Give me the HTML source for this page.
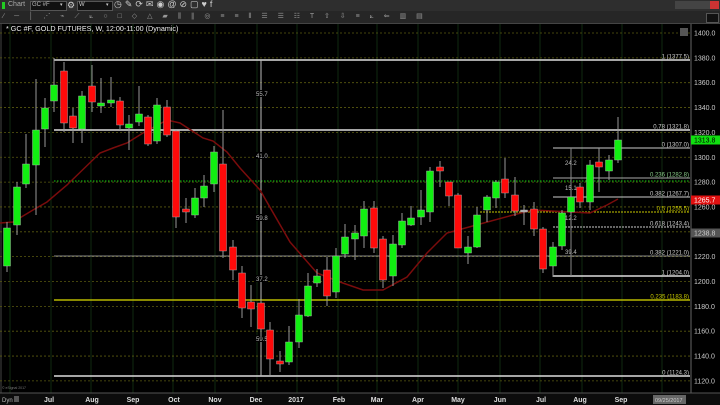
<!DOCTYPE html>
<html><head><meta charset="utf-8"><style>
html,body{margin:0;padding:0;background:#000;width:720px;height:405px;overflow:hidden;font-family:"Liberation Sans",sans-serif}
#top{position:absolute;left:0;top:0;width:720px;height:11px;background:#2e2e2e}
#tb{position:absolute;left:0;top:11px;width:720px;height:12px;background:#262626;border-bottom:1px solid #444}
.t{position:absolute;color:#ccc;font-size:7px;line-height:10px;white-space:nowrap}
</style></head><body>
<div id="top">
 <div style="position:absolute;left:2px;top:2px;width:3px;height:7px;background:#2c2"></div>
 <div class="t" style="left:8px;top:0;color:#aaa">Chart</div>
 <div style="position:absolute;left:30px;top:1px;width:35px;height:8px;background:#111;border:1px solid #555"></div>
 <div class="t" style="left:32px;top:0;font-size:6px;color:#bbb">GC #F</div>
 <div class="t" style="left:60px;top:0;font-size:5px">▾</div>
 <div class="t" style="left:67px;top:0;font-size:9px">⚙</div>
 <div style="position:absolute;left:77px;top:1px;width:34px;height:8px;background:#111;border:1px solid #555"></div>
 <div class="t" style="left:79px;top:0;font-size:6px">W</div>
 <div class="t" style="left:106px;top:0;font-size:5px">▾</div>
 <div class="t" style="left:114px;top:-1px;font-size:9px;letter-spacing:3px">◷✎⟳✉◉@⊘▢♥f</div>
 <div style="position:absolute;left:675px;top:1px;width:44px;height:8px;background:#444"></div>
 <div style="position:absolute;left:710px;top:1px;width:9px;height:8px;background:#c33"></div>
</div>
<div id="tb">
 <div class="t" style="left:3px;top:1px;color:#999;font-size:7px;letter-spacing:4px">∕ ─ │ ⋰ ⌁ ⟋ ⟀ ○ □ ◇ △ ▰ ⫼ ∥ ◎ ≡ ≡ ⫴ ☰ ☰ ☷ T ⇧ ⇩ ≡ ⟀ ⇐ ▥ ▤</div>
 <div style="position:absolute;left:706px;top:2px;width:11px;height:8px;background:#111;border:1px solid #555"></div>
</div>
<svg id="s" width="720" height="405" style="position:absolute;left:0;top:0" xmlns="http://www.w3.org/2000/svg" font-family="Liberation Sans, sans-serif">
<rect x="0" y="24" width="720" height="369" fill="#000"/>
<g id="grid"></g>
<g id="fib"></g>
<polyline fill="none" stroke="#7a0c0c" stroke-width="1.5" points="0,223 13,222 33,210 47,202 67,185 100,153 113,148 127,143 143,133 167,120 180,123 203,138 213,141 227,152 240,168 260,190 290,242 317,273 340,282 363,290 383,290 407,277 427,253 447,233 480,224 513,215 533,210 570,212 590,213 607,205 618,199"/>
<g id="c"></g>
<line x1="691" y1="24" x2="691" y2="393" stroke="#666" stroke-width="1"/>
<g id="ax" font-size="7" fill="#ccc"></g>
<rect x="680" y="28" width="8" height="8" fill="#555"/>
<text x="6" y="31" font-size="7.2" fill="#eee">* GC #F, GOLD FUTURES, W, 12:00-11:00 (Dynamic)</text>
<text x="2" y="389" font-size="3.5" fill="#777">© eSignal 2017</text>
<rect x="0" y="393" width="720" height="12" fill="#0c0c0c"/>
<line x1="0" y1="393" x2="720" y2="393" stroke="#555"/>
<text x="2" y="402" font-size="6" fill="#bbb">Dyn</text>
<rect x="14" y="396" width="5" height="6" fill="#555"/>
<g id="mo" font-size="7" font-weight="bold" fill="#ddd"></g>
<rect x="653" y="395" width="33" height="9" fill="#666"/>
<text x="655" y="402" font-size="5.5" fill="#ccc">09/25/2017</text>
</svg>
<script>
var NS="http://www.w3.org/2000/svg";
function el(p,t,a,txt){var e=document.createElementNS(NS,t);for(var k in a)e.setAttribute(k,a[k]);if(txt)e.textContent=txt;document.getElementById(p).appendChild(e);return e;}
function Y(p){return 33+(1400-p)*1.2425;}
[10,51,91,133,173,215,257,297,338,377,418,458,500,540,582,622,662].forEach(function(x){el("grid","line",{x1:x,y1:24,x2:x,y2:393,stroke:"#0f2a0f","stroke-width":1});});
el("grid","line",{x1:1,y1:24,x2:1,y2:393,stroke:"#444","stroke-width":1});
for(var p=1400;p>=1120;p-=20){var y=Y(p);el("grid","line",{x1:0,y1:y,x2:691,y2:y,stroke:"#5a5a10","stroke-width":0.8,"stroke-dasharray":"2,2"});el("ax","text",{x:694,y:y+2.5},p.toFixed(1));}
function L(x1,y,c,w,d,lab){var a={x1:x1,y1:y,x2:690,y2:y,stroke:c,"stroke-width":w};if(d)a["stroke-dasharray"]=d;el("fib","line",a);if(lab)el("fib","text",{x:689,y:y-1.5,"font-size":6,"text-anchor":"end",fill:c=="#c8c800"?"#c8c800":"#ccc"},lab);}
L(54,60,"#ddd",1.5,0,"1 (1377.5)");
L(54,130,"#ddd",1.5,0,"0.78 (1321.8)");
L(54,376,"#ddd",1.5,0,"0 (1124.3)");
L(54,181,"#1c1",1,"1.5,1.5");
L(54,300,"#b8b800",1.5,0,"");
el("fib","text",{x:689,y:298.5,"font-size":6,"text-anchor":"end",fill:"#c8c800"},"0.235 (1183.8)");
L(54,256,"#888",1,0,"0.382 (1221.0)");
L(553,148,"#ccc",1,0,"0 (1307.0)");
L(553,178,"#aaa",1,0,"");
el("fib","text",{x:689,y:176.5,"font-size":6,"text-anchor":"end",fill:"#8c8"},"0.236 (1282.8)");
L(553,197,"#ccc",1,0,"0.382 (1267.7)");
L(480,212,"#c8c800",1,"2,1","0.5 (1255.5)");
L(553,227,"#ccc",1,"2,1","0.618 (1243.4)");
L(553,276,"#ddd",1.5,0,"1 (1204.0)");
el("fib","line",{x1:54,y1:58,x2:54,y2:64,stroke:"#aaa"});
el("fib","line",{x1:261,y1:60,x2:261,y2:376,stroke:"#bbb","stroke-width":1});
el("fib","line",{x1:571,y1:148,x2:571,y2:276,stroke:"#888","stroke-width":1});
[["55.7",96],["41.0",158],["59.8",220],["37.2",281],["59.5",341]].forEach(function(a){el("fib","rect",{x:255,y:a[1]-6,width:12,height:7,fill:"#000"});el("fib","text",{x:256,y:a[1],"font-size":6,fill:"#bbb"},a[0]);});
[["24.2",165],["15.1",190],["12.2",220],["39.4",254]].forEach(function(a){el("fib","text",{x:565,y:a[1],"font-size":6,fill:"#bbb"},a[0]);});
var C=[[7,228,266,222,272,1],[17,187,225,182,235,1],[26,164,184,134,188,1],[36,130,165,79,215,1],[45,108,129,98,147,1],[54,85,101,59,112,1],[64,71,123,62,132,0],[73,116,128,108,143,0],[82,96,129,91,143,1],[92,86,102,65,112,0],[101,103,106,78,113,1],[111,100,103,77,107,1],[120,101,125,97,130,0],[129,124,128,115,150,1],[139,114,122,86,126,1],[148,117,144,115,146,0],[157,105,141,98,144,1],[167,107,135,100,137,0],[176,131,217,130,228,0],[186,209,212,198,223,0],[195,198,215,188,218,1],[204,186,198,175,207,1],[214,152,184,146,192,1],[223,164,251,110,258,0],[233,247,270,240,280,0],[242,273,308,266,318,0],[251,302,309,285,327,0],[261,303,329,300,336,0],[270,330,359,322,375,0],[280,361,364,351,372,0],[289,342,362,326,365,1],[299,315,342,299,348,1],[308,286,316,273,317,1],[317,276,283,269,287,1],[327,270,296,257,306,0],[336,256,292,248,298,1],[345,237,254,224,258,1],[355,233,239,225,260,1],[364,209,236,201,248,1],[374,208,248,201,253,0],[383,239,280,236,288,0],[393,244,276,235,286,1],[402,221,245,213,248,1],[411,218,225,206,226,1],[421,210,217,190,225,1],[430,171,212,167,222,1],[440,167,171,161,187,0],[449,182,196,182,206,0],[458,195,248,193,248,0],[468,247,253,236,264,1],[477,215,247,207,248,1],[487,197,210,195,222,1],[496,182,198,180,208,1],[505,179,193,158,198,0],[515,195,211,177,216,0],[524,210,212,205,225,2],[534,209,229,202,236,0],[543,229,269,227,273,0],[553,247,266,242,277,1],[562,213,246,210,250,1],[571,197,212,190,230,1],[580,187,202,183,208,0],[590,165,202,160,210,1],[599,162,167,148,192,0],[609,160,171,155,180,1],[618,140,160,117,163,1]];
C.forEach(function(c){var col=c[5]==1?"#11ee11":c[5]==0?"#ff0a0a":"#aaa";
el("c","line",{x1:c[0],y1:c[3],x2:c[0],y2:c[4],stroke:"#999","stroke-width":1});
el("c","rect",{x:c[0]-3.5,y:c[1],width:7,height:Math.max(1.5,c[2]-c[1]),fill:col,stroke:"#bbb","stroke-width":0.4});});
function tag(y,bg,fg,t){el("ax","rect",{x:691,y:y-4.5,width:29,height:9,fill:bg});el("ax","polygon",{points:(691)+","+y+" 694,"+(y-4.5)+" 694,"+(y+4.5),fill:bg});el("ax","text",{x:694,y:y+2.5,fill:fg},t);}
tag(140,"#10e010","#000","1313.8");tag(200,"#e01010","#fff","1265.7");tag(233,"#555","#ccc","1238.8");
[["Jul",49],["Aug",92],["Sep",133],["Oct",174],["Nov",215],["Dec",256],["2017",296],["Feb",339],["Mar",377],["Apr",418],["May",458],["Jun",500],["Jul",541],["Aug",580],["Sep",621]].forEach(function(m){el("mo","text",{x:m[1],y:402,"text-anchor":"middle"},m[0]);});
</script>
</body></html>
